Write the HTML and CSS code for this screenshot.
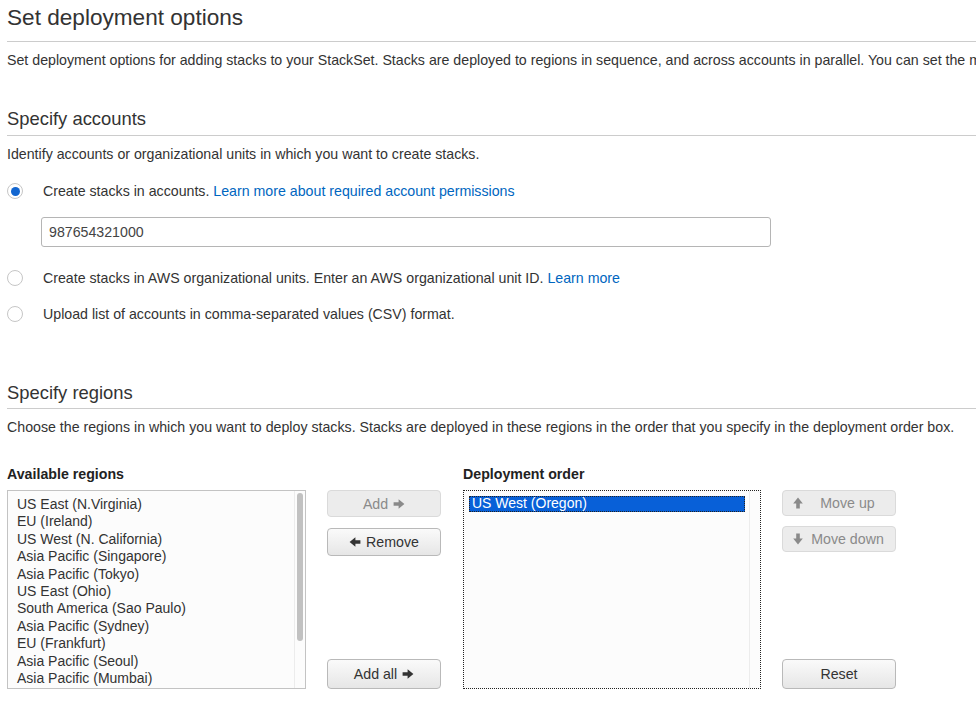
FILE: index.html
```html
<!DOCTYPE html>
<html>
<head>
<meta charset="utf-8">
<link rel="stylesheet" href="styles.css">
</head>
<body>
<div class="page">
  <h1 class="title">Set deployment options</h1>
  <p class="intro">Set deployment options for adding stacks to your StackSet. Stacks are deployed to regions in sequence, and across accounts in parallel. You can set the maximum number of concurrent accounts and failure tolerance.</p>

  <h2 class="section first">Specify accounts</h2>
  <p class="desc">Identify accounts or organizational units in which you want to create stacks.</p>

  <div class="radio-row r1"><span class="radio checked"></span><span>Create stacks in accounts. <a class="link">Learn more about required account permissions</a></span></div>
  <div class="input">987654321000</div>
  <div class="radio-row r2"><span class="radio"></span><span>Create stacks in AWS organizational units. Enter an AWS organizational unit ID. <a class="link">Learn more</a></span></div>
  <div class="radio-row r3"><span class="radio"></span><span>Upload list of accounts in comma-separated values (CSV) format.</span></div>

  <h2 class="section second">Specify regions</h2>
  <p class="desc">Choose the regions in which you want to deploy stacks. Stacks are deployed in these regions in the order that you specify in the deployment order box.</p>

  <div class="regions">
    <div class="lbl c1">Available regions</div>
    <div class="lbl c3">Deployment order</div>

    <div class="listbox avail">
      <div class="item">US East (N.Virginia)</div>
      <div class="item">EU (Ireland)</div>
      <div class="item">US West (N. California)</div>
      <div class="item">Asia Pacific (Singapore)</div>
      <div class="item">Asia Pacific (Tokyo)</div>
      <div class="item">US East (Ohio)</div>
      <div class="item">South America (Sao Paulo)</div>
      <div class="item">Asia Pacific (Sydney)</div>
      <div class="item">EU (Frankfurt)</div>
      <div class="item">Asia Pacific (Seoul)</div>
      <div class="item">Asia Pacific (Mumbai)</div>
      <div class="scroll"></div>
    </div>

    <div class="btncol">
      <button class="btn disabled">Add <svg class="ico" viewBox="0 0 12 12"><path d="M0.6 4.2h5V1.2l5.8 4.8-5.8 4.8V7.8h-5z"/></svg></button>
      <button class="btn mt"><svg class="ico" viewBox="0 0 12 12"><path d="M11.4 4.2h-5V1.2L0.6 6l5.8 4.8V7.8h5z"/></svg> Remove</button>
      <button class="btn bottom">Add all <svg class="ico" viewBox="0 0 12 12"><path d="M0.6 4.2h5V1.2l5.8 4.8-5.8 4.8V7.8h-5z"/></svg></button>
    </div>

    <div class="listbox order">
      <div class="item sel">US West (Oregon)</div>
      <div class="track"></div>
    </div>

    <div class="btncol">
      <button class="btn disabled move"><svg class="ico" viewBox="0 0 12 12"><path d="M4.2 11.4v-5H1.2L6 0.6l4.8 5.8H7.8v5z"/></svg><span class="mtxt">Move up</span></button>
      <button class="btn disabled move mt2"><svg class="ico" viewBox="0 0 12 12"><path d="M4.2 0.6v5H1.2L6 11.4l4.8-5.8H7.8v-5z"/></svg><span class="mtxt">Move down</span></button>
      <button class="btn bottom">Reset</button>
    </div>
  </div>
</div>
</body>
</html>
```

FILE: styles.css
```css
* { box-sizing: border-box; }
html, body { margin: 0; padding: 0; background: #fff; }
body {
  font-family: "Liberation Sans", Arial, Helvetica, sans-serif;
  color: #333;
  font-size: 14.2px;
  overflow: hidden;
  width: 976px;
  height: 704px;
}
.page { padding-left: 7px; overflow: hidden; }

.title {
  margin: 6px 0 0 0;
  font-size: 22.6px;
  font-weight: normal;
  line-height: 24px;
  padding-bottom: 11px;
  border-bottom: 1px solid #ccc;
  color: #333;
}
.intro {
  margin: 8px 0 0 0;
  line-height: 20px;
  white-space: nowrap;
  overflow: hidden;
}
.section {
  font-size: 18.4px;
  font-weight: normal;
  line-height: 22px;
  margin: 0;
  padding-bottom: 5px;
  border-bottom: 1px solid #ccc;
  color: #333;
}
.section.first { margin-top: 38px; }
.section.second { margin-top: 58px; padding-bottom: 4px; }
.desc { margin: 8px 0 0 0; line-height: 20px; white-space: nowrap; }

.radio-row {
  display: flex;
  align-items: center;
  height: 20px;
  line-height: 20px;
}
.r1 { margin-top: 17px; }
.r2 { margin-top: 21px; }
.r3 { margin-top: 16px; }
.radio {
  width: 16px; height: 16px;
  border-radius: 50%;
  border: 1px solid #c6c6c6;
  background: #fff;
  margin-right: 20px;
  flex: none;
  display: flex; align-items: center; justify-content: center;
}
.radio.checked::after {
  content: "";
  width: 9px; height: 9px;
  border-radius: 50%;
  background: #1266d0;
}
.link { color: #0066c0; text-decoration: none; }

.input {
  margin: 16px 0 0 34px;
  width: 730px;
  height: 30px;
  border: 1px solid #b5b5b5;
  border-radius: 3px;
  padding: 0 7px;
  line-height: 28px;
  color: #444;
}

.regions {
  display: grid;
  grid-template-columns: 299px 114px 299px 115px;
  column-gap: 21px;
  grid-template-rows: 20px 199px;
  row-gap: 6px;
  margin-top: 27px;
}
.lbl { font-weight: bold; line-height: 20px; color: #222; }
.lbl.c1 { grid-column: 1; grid-row: 1; }
.lbl.c3 { grid-column: 3; grid-row: 1; margin-left: 1px; }
.avail { grid-column: 1; grid-row: 2; }
.order { grid-column: 3; grid-row: 2; margin-left: 1px; }
.btncol { grid-row: 2; display: flex; flex-direction: column; }
.btncol:nth-child(4) { grid-column: 2; }
.btncol:nth-child(6) { grid-column: 4; }

.listbox {
  position: relative;
  border: 1px solid #c3c3c3;
  background: #fcfcfc;
  padding-top: 5px;
  overflow: hidden;
}
.avail .item {
  padding-left: 9px;
  line-height: 17.4px;
  font-size: 14px;
  color: #333;
  white-space: nowrap;
}
.scroll {
  position: absolute;
  right: 2px; top: 2px;
  width: 6px; height: 148px;
  border-radius: 3px;
  background: #c1c1c1;
}
.avail::after {
  content: "";
  position: absolute;
  right: 10px; top: 0; bottom: 0;
  border-left: 1px solid #ececec;
}
.order {
  border: 1px dotted #222;
  padding: 5px 0 0 5px;
}
.order .item.sel {
  width: 276px;
  height: 16px;
  line-height: 15px;
  background: #0860d8;
  color: #fff;
  padding-left: 3px;
  outline: 1px dotted #222;
  outline-offset: -1px;
  font-size: 14px;
}
.track {
  position: absolute;
  right: 10px; top: 0; bottom: 0;
  border-left: 1px solid #ececec;
}

.btn {
  font-family: "Liberation Sans", Arial, sans-serif;
  font-size: 14.2px;
  height: 28px;
  border: 1px solid #b9b9b9;
  border-radius: 4px;
  background: linear-gradient(#fafafa, #e6e6e6);
  color: #333;
  display: flex;
  align-items: center;
  justify-content: center;
  gap: 5px;
  padding: 0;
  width: 114px;
}
.btn.disabled {
  background: #ececec;
  border-color: #dadada;
  color: #8a8a8a;
  height: 27px;
}
.btn.mt { margin-top: 11px; }
.btn.mt2 { margin-top: 10px; }
.btn.move { justify-content: flex-start; padding-left: 9px; gap: 0; height: 26px; }
.mtxt { flex: 1; text-align: center; padding-right: 4px; }
.btn.bottom { margin-top: auto; height: 30px; }
.ico { width: 12px; height: 12px; fill: currentColor; flex: none; }
.btn.disabled .ico { fill: #8a8a8a; }
```
